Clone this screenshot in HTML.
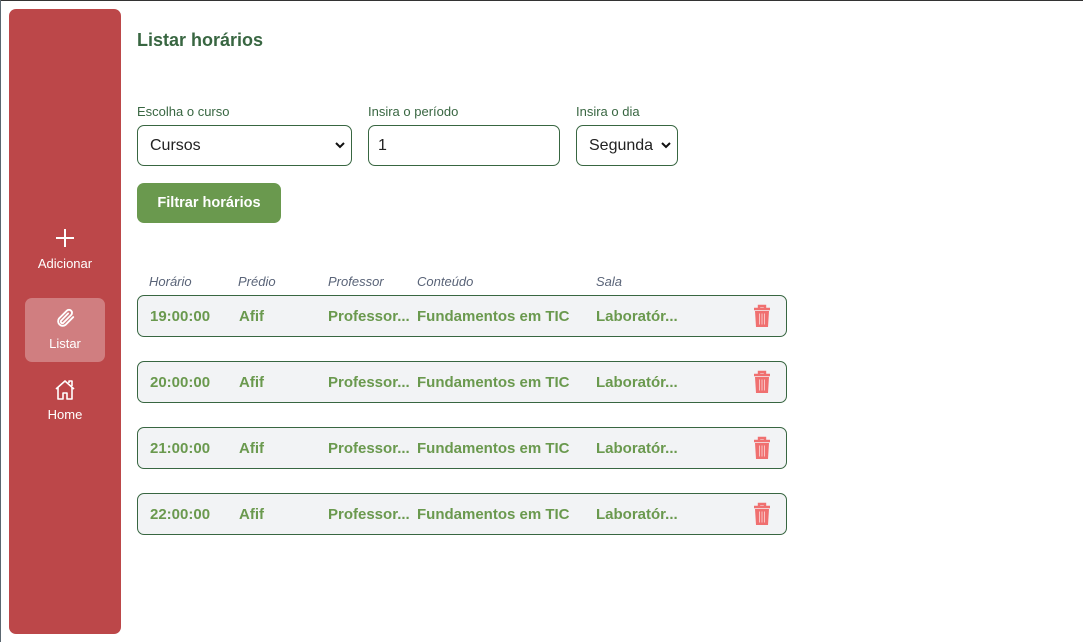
<!DOCTYPE html>
<html><head><meta charset="utf-8"><style>
*{box-sizing:border-box;margin:0;padding:0}
body{width:1083px;height:642px;background:#fff;font-family:"Liberation Sans",sans-serif;position:relative;overflow:hidden}
.a{position:absolute}
.side{left:9px;top:9px;width:112px;height:625px;background:#bc4749;border-radius:7px}
.nav{color:#fff;font-size:13px;text-align:center;width:80px}
h1{left:137px;top:30px;font-size:18px;color:#386641;font-weight:bold}
.lbl{font-size:13px;color:#386641}
.box{border:1px solid #386641;border-radius:7px;height:41px;top:125px;font-size:16px;color:#222;padding-left:12px;line-height:40px}
.chev{position:absolute;right:6px;top:15px}
.btn{left:137px;top:183px;width:144px;height:40px;background:#6a994e;border-radius:7px;color:#fff;font-weight:bold;font-size:14.5px;text-align:center;line-height:40px}
.hd{top:274px;font-size:13px;font-style:italic;color:#5a6478}
.row{left:137px;width:650px;height:42px;border:1px solid #386641;border-radius:7px;background:#f2f3f5}
.row span{position:absolute;top:12px;font-weight:bold;font-size:15px;color:#6a994e;white-space:nowrap}
.row svg{position:absolute;left:613px;top:8px}
</style></head><body>
<div class="a" style="left:0;top:0;width:1083px;height:1px;background:#333"></div>
<div class="a" style="left:0;top:0;width:1px;height:642px;background:#5b6770"></div>
<div class="a side"></div>
<div class="a nav" style="left:25px;top:228px"><svg width="20" height="20" viewBox="0 0 20 20"><path d="M10 1v18M1 10h18" stroke="#fff" stroke-width="2"/></svg><div style="margin-top:5px">Adicionar</div></div>
<div class="a" style="left:25px;top:298px;width:80px;height:64px;background:rgba(255,255,255,.3);border-radius:7px"></div>
<div class="a nav" style="left:25px;top:307px"><svg width="22" height="22" viewBox="0 0 24 24"><path d="M21 11l-8.5 8.5a5 5 0 0 1-7-7L14 4a3.3 3.3 0 0 1 4.7 4.7L10.2 17.2a1.7 1.7 0 0 1-2.4-2.4L15.5 7" fill="none" stroke="#fff" stroke-width="2" stroke-linecap="round"/></svg><div style="margin-top:4px">Listar</div></div>
<div class="a nav" style="left:25px;top:378px"><svg width="24" height="24" viewBox="0 0 24 24"><path d="M3 11L12 3l9 8M5 9v12h5v-6h4v6h5V9M16 5V3h3v5" fill="none" stroke="#fff" stroke-width="1.6" stroke-linejoin="round"/></svg><div style="margin-top:2px">Home</div></div>
<h1 class="a">Listar horários</h1>
<div class="a lbl" style="left:137px;top:104px">Escolha o curso</div>
<div class="a lbl" style="left:368px;top:104px">Insira o período</div>
<div class="a lbl" style="left:576px;top:104px">Insira o dia</div>
<div class="a box" style="left:137px;width:215px">Cursos<svg class="chev" width="10" height="8" viewBox="0 0 10 8"><path d="M1 2l4 4 4-4" fill="none" stroke="#111" stroke-width="2"/></svg></div>
<div class="a box" style="left:368px;width:192px;padding-left:9px">1</div>
<div class="a box" style="left:576px;width:102px">Segunda<svg class="chev" width="10" height="8" viewBox="0 0 10 8"><path d="M1 2l4 4 4-4" fill="none" stroke="#111" stroke-width="2"/></svg></div>
<div class="a btn">Filtrar horários</div>
<div class="a hd" style="left:149px">Horário</div>
<div class="a hd" style="left:238px">Prédio</div>
<div class="a hd" style="left:328px">Professor</div>
<div class="a hd" style="left:417px">Conteúdo</div>
<div class="a hd" style="left:596px">Sala</div>
<div class="a row" style="top:295px"><span style="left:12px">19:00:00</span><span style="left:101px">Afif</span><span style="left:190px">Professor...</span><span style="left:279px">Fundamentos em TIC</span><span style="left:458px">Laboratór...</span><svg width="22" height="24" viewBox="0 0 22 24"><path d="M3 5h16M8 5V2h6v3" stroke="#f07070" stroke-width="2.4" fill="none"/><path d="M4 7h14l-1 16H5z" fill="#f07070"/><path d="M8.5 9.5v11M11 9.5v11M13.5 9.5v11" stroke="#f9c3c3" stroke-width="1"/></svg></div>
<div class="a row" style="top:361px"><span style="left:12px">20:00:00</span><span style="left:101px">Afif</span><span style="left:190px">Professor...</span><span style="left:279px">Fundamentos em TIC</span><span style="left:458px">Laboratór...</span><svg width="22" height="24" viewBox="0 0 22 24"><path d="M3 5h16M8 5V2h6v3" stroke="#f07070" stroke-width="2.4" fill="none"/><path d="M4 7h14l-1 16H5z" fill="#f07070"/><path d="M8.5 9.5v11M11 9.5v11M13.5 9.5v11" stroke="#f9c3c3" stroke-width="1"/></svg></div>
<div class="a row" style="top:427px"><span style="left:12px">21:00:00</span><span style="left:101px">Afif</span><span style="left:190px">Professor...</span><span style="left:279px">Fundamentos em TIC</span><span style="left:458px">Laboratór...</span><svg width="22" height="24" viewBox="0 0 22 24"><path d="M3 5h16M8 5V2h6v3" stroke="#f07070" stroke-width="2.4" fill="none"/><path d="M4 7h14l-1 16H5z" fill="#f07070"/><path d="M8.5 9.5v11M11 9.5v11M13.5 9.5v11" stroke="#f9c3c3" stroke-width="1"/></svg></div>
<div class="a row" style="top:493px"><span style="left:12px">22:00:00</span><span style="left:101px">Afif</span><span style="left:190px">Professor...</span><span style="left:279px">Fundamentos em TIC</span><span style="left:458px">Laboratór...</span><svg width="22" height="24" viewBox="0 0 22 24"><path d="M3 5h16M8 5V2h6v3" stroke="#f07070" stroke-width="2.4" fill="none"/><path d="M4 7h14l-1 16H5z" fill="#f07070"/><path d="M8.5 9.5v11M11 9.5v11M13.5 9.5v11" stroke="#f9c3c3" stroke-width="1"/></svg></div>
</body></html>
